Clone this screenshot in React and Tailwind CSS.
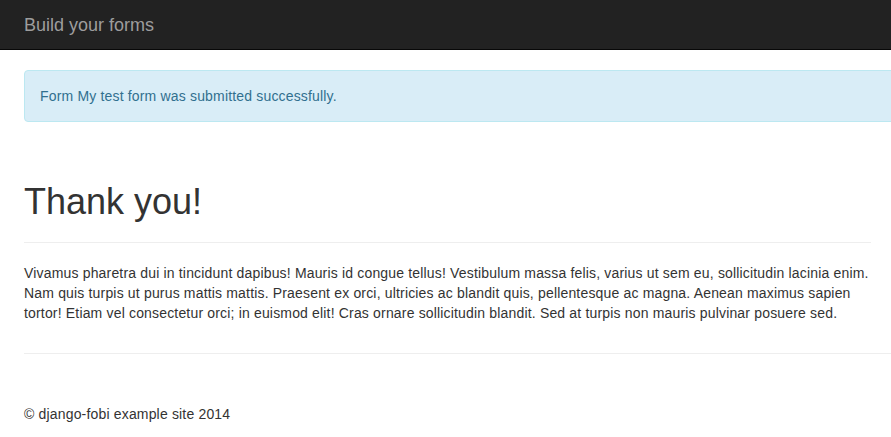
import React from 'react';

const text =
    'Vivamus pharetra dui in tincidunt dapibus! Mauris id congue tellus! Vestibulum massa felis, varius ut sem eu, sollicitudin lacinia enim. Nam quis turpis ut purus mattis mattis. Praesent ex orci, ultricies ac blandit quis, pellentesque ac magna. Aenean maximus sapien tortor! Etiam vel consectetur orci; in euismod elit! Cras ornare sollicitudin blandit. Sed at turpis non mauris pulvinar posuere sed.';

const App = () => {
    return (
        <div
            className="min-h-[437px] overflow-hidden bg-white text-[14px] leading-[20px] text-[#333]"
            style={{ fontFamily: '"Liberation Sans", Arial, sans-serif' }}
        >
            <nav className="h-[50px] bg-[#222] border-b border-[#080808]">
                <div className="pl-[24px] pt-[15px]">
                    <a href="#" className="text-[18px] leading-[20px] text-[#9d9d9d] hover:text-white">
                        Build your forms
                    </a>
                </div>
            </nav>

            <div className="w-[960px] pl-[24px] tracking-[0.17px]">
                <div className="mt-[20px] rounded-[4px] border border-[#bce8f1] bg-[#d9edf7] p-[15px] text-[#31708f]">
                    Form My test form was submitted successfully.
                </div>

                <div className="w-[847px] mt-[60px] border-b border-[#eee] pb-[20px] tracking-normal">
                    <h1 className="text-[36px] leading-[39.6px] font-normal text-[#333]">Thank you!</h1>
                </div>

                <p className="w-[850px] mt-[20px] mb-[10px]">{text}</p>

                <hr className="mt-[30px] border-t border-[#eee]" />

                <footer className="mt-[50px]">
                    <p>© django-fobi example site 2014</p>
                </footer>
            </div>
        </div>
    );
};

export default App;
